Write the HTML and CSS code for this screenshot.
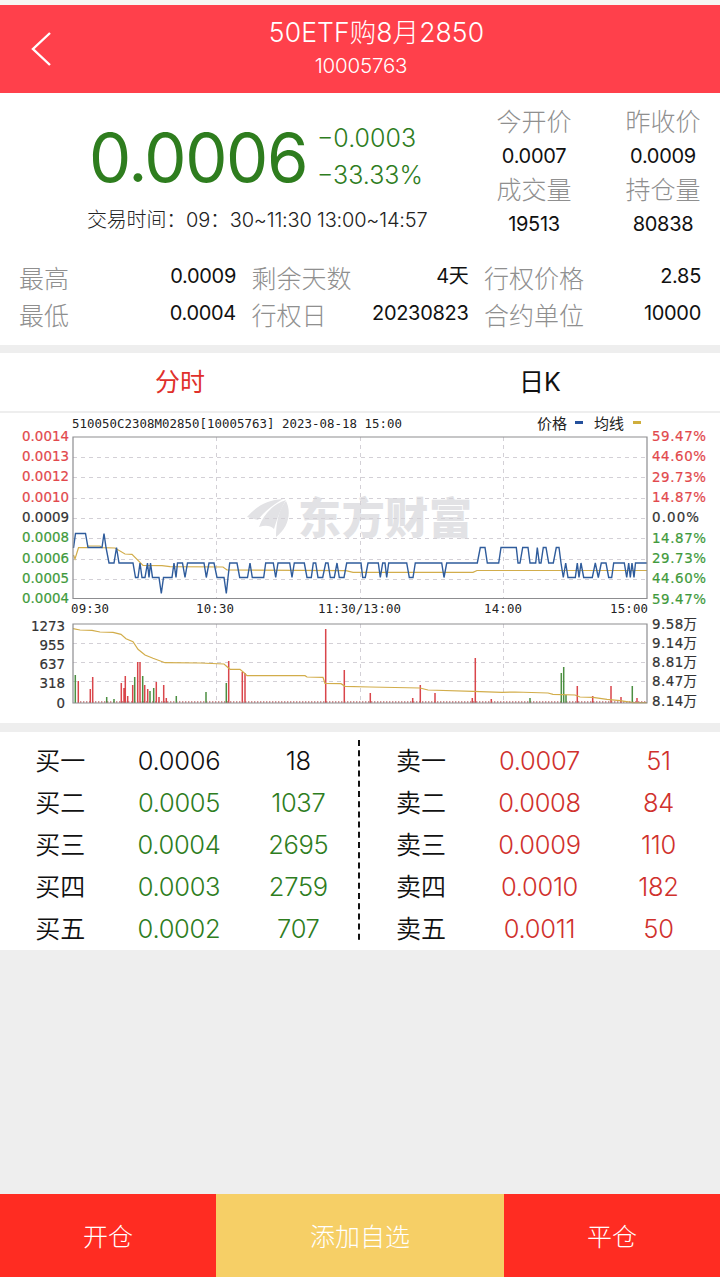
FILE: index.html
```html
<!DOCTYPE html>
<html lang="zh-CN">
<head>
    <meta charset="UTF-8">
    <meta name="viewport" content="width=device-width, initial-scale=1.0">
    <title>50ETF购8月2850</title>
    <link rel="stylesheet" href="styles.css">
</head>
<body>
    <header class="header">
        <svg class="back" width="24" height="36" viewBox="0 0 24 36"><path d="M20 2 L3 18 L20 34"/></svg>
        <div class="title">
            <h1>50ETF购8月2850</h1>
            <p>10005763</p>
        </div>
    </header>

    <section class="quote">
        <div class="quote-top">
            <div class="quote-main">
                <div class="price-row">
                    <span class="price">0.0006</span>
                    <div class="change">
                        <span>−0.0003</span>
                        <span>−33.33%</span>
                    </div>
                </div>
                <p class="time">交易时间：09：30~11:30 13:00~14:57</p>
            </div>
            <div class="quote-side">
                <label>今开价</label><label>昨收价</label>
                <span>0.0007</span><span>0.0009</span>
                <label>成交量</label><label>持仓量</label>
                <span>19513</span><span>80838</span>
            </div>
        </div>
        <div class="facts">
            <div class="fact"><label>最高</label><span>0.0009</span></div>
            <div class="fact"><label>剩余天数</label><span>4天</span></div>
            <div class="fact"><label>行权价格</label><span>2.85</span></div>
            <div class="fact"><label>最低</label><span>0.0004</span></div>
            <div class="fact"><label>行权日</label><span>20230823</span></div>
            <div class="fact"><label>合约单位</label><span>10000</span></div>
        </div>
    </section>

    <nav class="tabs">
        <a class="active">分时</a>
        <a>日K</a>
    </nav>

    <section class="chart">
        <svg width="720" height="310" viewBox="0 413 720 310">
            <!-- watermark -->
            <g class="watermark">
                <path d="M247 517 C256 506 268 500 283 499 C271 506 263 513 258 520 Z"/>
                <path d="M259 527 C263 515 273 504 286 500 C281 508 277 519 274 529 C270 525 265 525 259 527 Z"/>
                <path d="M276 537 C276 522 279 509 286 501 C292 513 288 528 276 537 Z"/>
                <text x="298" y="534" textLength="174">东方财富</text>
            </g>

            <!-- grid -->
            <path class="grid" d="M73 457.5H647 M73 477.5H647 M73 498.5H647 M73 518.5H647 M73 538.5H647 M73 559.5H647 M73 579.5H647 M73 643.5H647 M73 662.5H647 M73 681.5H647"/>
            <path class="grid" d="M216.5 437V598 M360.5 437V598 M503.5 437V598 M216.5 624V703 M360.5 624V703 M503.5 624V703"/>

            <!-- volume -->
            <path class="ticks" d="M80 702H647"/>
            <path class="bar-up" d="M78.3 703V681 M90.3 703V689 M92.7 703V677 M121.3 703V683 M124 703V688 M125.3 703V676 M127.7 703V696 M132.7 703V685 M137.7 703V662 M140 703V662 M144.7 703V685 M147.7 703V689 M156.3 703V682 M159 703V697 M163.7 703V685 M166.3 703V698 M228.7 703V661 M242.3 703V672 M245 703V673 M325.7 703V629 M344.3 703V670 M370.3 703V693 M412.7 703V698 M420.3 703V685 M435 703V693 M472.3 703V698 M475.3 703V658 M491.3 703V699 M577.3 703V686 M592.7 703V696 M611 703V686 M621 703V697 M637 703V698"/>
            <path class="bar-down" d="M75.3 703V675 M106.7 703V697 M114 703V699 M134.7 703V677 M142.7 703V676 M150 703V691 M153.7 703V688 M176.3 703V696 M206 703V692 M226.3 703V683 M530 703V698 M561.3 703V673 M563.7 703V667 M566 703V695 M632.3 703V686"/>
            <polyline class="avg" points="73,628.7 80,630 92,630.3 100,632 113,632.3 121,634.3 126,638.7 133,641.7 138,649.3 145,655 153,658.3 165,662.7 200,663 224,664 230,669.3 240,669.3 244,672.7 247,675.7 305,675.7 307,677 323,677.3 325,683.3 341,683.7 345,686.3 370,687 420,688 428,690 473,691.3 502,692.3 515,692 548,693 553,694.3 575,695 580,697 593,697.3 607,699.3 620,700.7 633,702.7 647,702.7"/>

            <!-- price -->
            <polyline class="avg" points="73.5,555 75,559 78.5,547.7 87,547.7 88,546 100,546 102,547.7 115,548 125,554 132,554.3 143,565.3 162,565.7 170,566.7 223,567 227,570 346,570.7 353,572.3 473,572.3 477,570.5 647,570.5"/>
            <polyline class="line" points="73.5,548 75.5,533.5 85.5,533.5 88,547.5 102,547.5 104,533.5 106,547.5 109,563 114,563 116.5,547.5 119,563 133,563 135.5,577.5 138,577.5 140,563 142,577.5 145,577.5 147.5,563 149,577.5 150.5,563 152.5,577.5 159,577.5 161.3,593.5 163.5,577.5 172,577.5 174,563 176,577.5 177.5,563 182.5,563 185,577.5 187.5,563 204,563 206.3,577.5 209,563 214,563 217,577.5 224,577.5 226.3,593.5 228,577.5 229.7,563 237,563 239.7,577.5 247.5,577.5 250,563 252.3,577.5 263.7,577.5 265.7,563 273.3,563 275.7,577.5 278,563 289.7,563 292,577.5 294.3,563 304.3,563 307,577.5 311.3,577.5 313.3,563 315.7,563 318,577.5 322.7,577.5 325.7,563 328,563 330.3,577.5 334.3,577.5 337,563 339.3,577.5 344,577.5 346.7,563 361,563 362.7,577.5 365.3,577.5 368,563 378.3,563 380.3,577.5 382.7,563 385,563 386.7,577.5 388.7,563 406.7,563 409.3,577.5 413,577.5 415.3,563 441.7,563 444,577.5 446.7,563 477.3,563 480.3,547.5 485,547.5 487.3,563 498.7,563 501,547.5 516.3,547.5 518,563 520,563 522.7,547.5 528,547.5 530,563 535.7,563 537.3,547.5 539.3,563 541,563 543.3,547.5 546,547.5 548.7,563 553.3,563 556.3,547.5 559,547.5 561,563 563.3,577.5 565.7,563 568,577.5 575.3,577.5 577.3,563 579,577.5 581,563 583.7,577.5 592.3,577.5 595.3,563 598.3,577.5 601.3,563 606,563 608.7,577.5 611.7,577.5 613.7,563 624.3,563 626.7,577.5 628.7,563 630.3,577.5 632,563 634,577.5 635.5,563 647,563"/>
            <path class="frame" d="M73 437H647V598.5H73Z M73 624H647V703H73Z"/>

            <!-- caption and legend -->
            <g class="mono">
                <text x="72" y="428" textLength="330">510050C2308M02850[10005763] 2023-08-18 15:00</text>
                <text x="71" y="613" textLength="38">09:30</text>
                <text x="196" y="613" textLength="38">10:30</text>
                <text x="318" y="613" textLength="83">11:30/13:00</text>
                <text x="484" y="613" textLength="38">14:00</text>
                <text x="610" y="613" textLength="38">15:00</text>
            </g>
            <g class="legend">
                <text x="537" y="429">价格</text>
                <rect x="575" y="421" width="8" height="3" fill="#24509c"/>
                <text x="594" y="429">均线</text>
                <rect x="633" y="421" width="8" height="3" fill="#cfae3c"/>
            </g>

            <g class="axis">
                <g class="up">
                    <text x="22" y="441" textLength="47">0.0014</text>
                    <text x="22" y="461" textLength="47">0.0013</text>
                    <text x="22" y="481" textLength="47">0.0012</text>
                    <text x="22" y="502" textLength="47">0.0010</text>
                    <text x="652" y="441" textLength="54">59.47%</text>
                    <text x="652" y="461" textLength="54">44.60%</text>
                    <text x="652" y="482" textLength="54">29.73%</text>
                    <text x="652" y="502" textLength="54">14.87%</text>
                </g>
                <text x="22" y="522" textLength="47">0.0009</text>
                <text x="652" y="522" textLength="47">0.00%</text>
                <g class="down">
                    <text x="22" y="542" textLength="47">0.0008</text>
                    <text x="22" y="563" textLength="47">0.0006</text>
                    <text x="22" y="583" textLength="47">0.0005</text>
                    <text x="22" y="603" textLength="47">0.0004</text>
                    <text x="652" y="543" textLength="54">14.87%</text>
                    <text x="652" y="563" textLength="54">29.73%</text>
                    <text x="652" y="583" textLength="54">44.60%</text>
                    <text x="652" y="604" textLength="54">59.47%</text>
                </g>
                <g class="right">
                    <text x="65" y="631">1273</text>
                    <text x="65" y="650">955</text>
                    <text x="65" y="669">637</text>
                    <text x="65" y="688">318</text>
                    <text x="65" y="708">0</text>
                </g>
                <text x="652" y="629" textLength="45">9.58万</text>
                <text x="652" y="648" textLength="45">9.14万</text>
                <text x="652" y="667" textLength="45">8.81万</text>
                <text x="652" y="686" textLength="45">8.47万</text>
                <text x="652" y="706" textLength="45">8.14万</text>
            </g>
        </svg>
    </section>

    <section class="book">
        <div class="side buy">
            <span>买一</span><b class="flat">0.0006</b><b class="flat">18</b>
            <span>买二</span><b>0.0005</b><b>1037</b>
            <span>买三</span><b>0.0004</b><b>2695</b>
            <span>买四</span><b>0.0003</b><b>2759</b>
            <span>买五</span><b>0.0002</b><b>707</b>
        </div>
        <svg class="divider" width="2" height="202"><path d="M1 0V202"/></svg>
        <div class="side sell">
            <span>卖一</span><b>0.0007</b><b>51</b>
            <span>卖二</span><b>0.0008</b><b>84</b>
            <span>卖三</span><b>0.0009</b><b>110</b>
            <span>卖四</span><b>0.0010</b><b>182</b>
            <span>卖五</span><b>0.0011</b><b>50</b>
        </div>
    </section>

    <footer class="footer">
        <button>开仓</button>
        <button class="favorite">添加自选</button>
        <button>平仓</button>
    </footer>
</body>
</html>
```
FILE: styles.css
```css
* {
    box-sizing: border-box;
}

body {
    margin: 0;
    height: 1277px;
    display: flex;
    flex-direction: column;
    background: #eeeeee;
    color: #111;
    font-family: Inter, "Noto Sans CJK SC", sans-serif;
    font-weight: 400;
    border-top: 5px solid #f7f5f2;
}

h1, p {
    margin: 0;
    font-weight: 300;
}

.header {
    height: 88px;
    display: grid;
    grid-template-columns: 100px 1fr 100px;
    align-items: center;
    background: #ff404b;
    color: #fff;
}

.back {
    margin-left: 30px;
}

.back path {
    fill: none;
    stroke: #fff;
    stroke-width: 2.4;
}

.title {
    text-align: center;
    padding-left: 2px;
}

.title h1 {
    padding-left: 31px;
    font-size: 26.5px;
    line-height: 34px;
    letter-spacing: 0.1px;
}

.title p {
    font-size: 20.5px;
    line-height: 34px;
    letter-spacing: -0.2px;
}

.quote {
    height: 252px;
    background: #fff;
}

.quote-top {
    display: flex;
    height: 167px;
}

.quote-main {
    width: 478px;
    padding-top: 26px;
}

.price-row {
    display: flex;
    align-items: center;
    height: 76px;
    padding-left: 89px;
    color: #2e7d1e;
}

.price {
    width: 228px;
    font-size: 67px;
    letter-spacing: -1.4px;
}

.change {
    display: flex;
    flex-direction: column;
    font-size: 25px;
    font-weight: 300;
    line-height: 37px;
}

.time {
    margin-top: 10px;
    padding-left: 87px;
    font-size: 20px;
    line-height: 30px;
    letter-spacing: -0.2px;
    color: #222;
    white-space: nowrap;
}

.quote-side {
    padding-top: 12px;
    display: grid;
    grid-template-columns: 112px 112px;
    grid-auto-rows: 34px;
    column-gap: 17px;
    line-height: 34px;
    text-align: center;
}

label {
    font-size: 25px;
    font-weight: 300;
    color: #8f8f8f;
}

.quote-side label {
    line-height: 35px;
}

.quote-side span, .fact span {
    font-size: 20px;
    letter-spacing: -0.3px;
}

.facts {
    display: grid;
    grid-template-columns: repeat(3, 217px);
    grid-auto-rows: 37px;
    column-gap: 15.5px;
    padding-left: 19px;
}

.fact {
    display: flex;
    justify-content: space-between;
    line-height: 38px;
}

.fact span {
    line-height: 32px;
}

.tabs {
    display: grid;
    grid-template-columns: 1fr 1fr;
    height: 60px;
    margin-top: 8px;
    background: #fff;
    border-bottom: 2px solid #eee;
    font-size: 25px;
    line-height: 59px;
    text-align: center;
}

.tabs .active {
    color: #e0302b;
}

.chart {
    height: 310px;
    background: #fff;
}

.chart svg {
    display: block;
}

.watermark {
    fill: #e2e2e5;
    font: 900 43px "Noto Sans CJK SC", sans-serif;
}

.grid {
    fill: none;
    stroke: #d3d0d6;
    stroke-dasharray: 4 4;
}

.frame {
    fill: none;
    stroke: #8d8d90;
    stroke-width: 1.2;
}

.line, .avg {
    fill: none;
    stroke: #2f5c9c;
    stroke-width: 1.4;
}

.avg {
    stroke: #d2ad4b;
    stroke-width: 1.2;
}

.bar-up, .bar-down {
    stroke: #d9464b;
    stroke-width: 1.5;
}

.bar-down {
    stroke: #4c8f42;
}

.ticks {
    stroke: #c26a6c;
    stroke-width: 1.6;
    stroke-dasharray: 1.4 1.6;
}

.mono {
    font: 12.4px "DejaVu Sans Mono", monospace;
    fill: #222;
}

.legend {
    font: 15px "Noto Sans CJK SC", sans-serif;
    fill: #222;
}

.axis {
    font: 13.4px "DejaVu Sans", "Noto Sans CJK SC", sans-serif;
    fill: #333;
    stroke: #333;
    stroke-width: 0.2;
}

.axis .up {
    fill: #e2484c;
    stroke: #e2484c;
}

.axis .down {
    fill: #3f9a3c;
    stroke: #3f9a3c;
}

.axis .right {
    text-anchor: end;
}

.book {
    display: flex;
    height: 218px;
    margin-top: 9px;
    padding-top: 8px;
    background: #fff;
}

.side {
    width: 358px;
    display: grid;
    grid-template-columns: repeat(3, 1fr);
    grid-auto-rows: 42px;
    line-height: 42px;
    text-align: center;
    font-size: 25px;
}

.sell {
    width: 357px;
    margin-left: 1px;
}

.side span {
    font-weight: 350;
    padding-left: 1px;
}

.side b {
    font-size: 25.5px;
    font-weight: 300;
    letter-spacing: -0.3px;
}

.buy b {
    color: #2e7d1e;
}

.buy .flat {
    color: #111;
}

.sell b {
    color: #d0312d;
}

.divider path {
    stroke: #111;
    stroke-width: 2;
    stroke-dasharray: 6 4.2;
}

.footer {
    display: grid;
    grid-template-columns: 216px 288px 216px;
    height: 83px;
    margin-top: auto;
}

.footer button {
    padding: 0 0 2px;
    border: none;
    background: #ff2c22;
    color: #fff;
    font: 300 25px "Noto Sans CJK SC", sans-serif;
}

.footer .favorite {
    background: #f6cf66;
}
```
